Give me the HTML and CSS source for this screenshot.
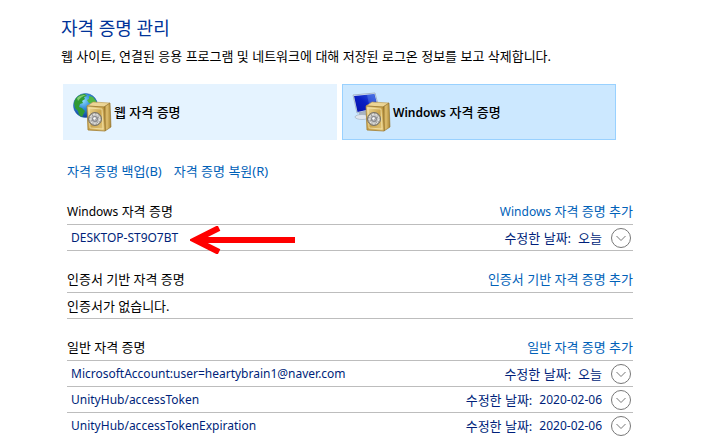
FILE: index.html
```html
<!DOCTYPE html>
<html lang="ko">
<head>
<meta charset="utf-8">
<title>자격 증명 관리</title>
<link rel="stylesheet" href="styles.css">
</head>
<body>
<svg class="defs" aria-hidden="true">
  <defs>
    <linearGradient id="gold" x1="0" y1="0" x2="1" y2="1">
      <stop offset="0" stop-color="#f3e0a0"/><stop offset=".5" stop-color="#c9a34c"/><stop offset="1" stop-color="#e6cb80"/>
    </linearGradient>
    <linearGradient id="side" x1="0" y1="0" x2="1" y2="0">
      <stop offset="0" stop-color="#8f6b1e"/><stop offset=".4" stop-color="#e0c070"/><stop offset="1" stop-color="#a98534"/>
    </linearGradient>
    <radialGradient id="sea" cx=".4" cy=".3" r=".7">
      <stop offset="0" stop-color="#8fdcff"/><stop offset=".5" stop-color="#2b86d6"/><stop offset="1" stop-color="#123f9c"/>
    </radialGradient>
    <linearGradient id="screen" x1="0" y1="1" x2="1" y2="0">
      <stop offset="0" stop-color="#0510a8"/><stop offset=".5" stop-color="#0a1fc4"/><stop offset="1" stop-color="#3b67e0"/>
    </linearGradient>
    <symbol id="safe" viewBox="0 0 40 40">
      <path d="M15 14 21 10 38 11 32 15z" fill="#ecd595" stroke="#b8954a" stroke-width=".6"/>
      <path d="M32 15 38 11 39 35 33 39z" fill="url(#side)" stroke="#8d6c25" stroke-width=".6"/>
      <path d="M15 14 32 15 33 39 16 38z" fill="url(#gold)" stroke="#a17c30" stroke-width=".8"/>
      <path d="M17 16 30 17 31 37 18 36z" fill="none" stroke="#f8e9b5" stroke-width=".7"/>
      <circle cx="23" cy="27" r="6.500" fill="#a8a49a" stroke="#77736a" stroke-width="1"/>
      <circle cx="23" cy="27" r="5" fill="#c4c4c2" stroke="#fff" stroke-width=".8" stroke-dasharray="2 1.500"/>
      <circle cx="23" cy="27" r="2.600" fill="#b4b4b6" stroke="#74767c" stroke-width=".7"/>
      <path d="M20 23l6 8M19 29l8-4" stroke="#888" stroke-width=".7"/>
      <circle cx="22.500" cy="26.500" r="1.200" fill="#fff"/>
    </symbol>
  </defs>
</svg>
<main class="page">
  <h1 class="title">자격 증명 관리</h1>
  <p class="intro">웹 사이트, 연결된 응용 프로그램 및 네트워크에 대해 저장된 로그온 정보를 보고 삭제합니다.</p>

  <div class="tiles">
    <button class="tile" type="button">
      <svg class="tile-icon" viewBox="0 0 40 40" aria-hidden="true">
        <circle cx="13.500" cy="13.500" r="12" fill="url(#sea)" stroke="#2a63a8" stroke-width=".6"/>
        <path d="M3 8C5 4 9 2 13 2l2 2-3 1 1 2-3 2 1 2-3 1-1 3 3 1 3 3-2 4-1 2-3-2-1-4-3-3-1-5z" fill="#2f9a34"/>
        <path d="M17 4l4 1 3 4 1 4-3 1-2-3-3 0-2-3 2-1z" fill="#4fb843"/>
        <path d="M5 6C8 3 11 3 14 3c-3 1-6 3-8 6z" fill="#b7eb9c" opacity=".6"/>
        <use href="#safe"/>
      </svg>
      <span>웹 자격 증명</span>
    </button>
    <button class="tile tile-active" type="button">
      <svg class="tile-icon" viewBox="0 0 40 40" aria-hidden="true">
        <path d="M8 20l7-1 1 5-8 1z" fill="#aab4c0"/>
        <ellipse cx="11" cy="25" rx="7" ry="2.500" fill="#dfe6ee" stroke="#9ba9b8" stroke-width=".6"/>
        <path d="M2 3 24 1 28 16 6 21z" fill="#e5edf5" stroke="#8c9db4" stroke-width=".7"/>
        <path d="M3 4 23.500 2 27 15.500 6.500 20z" fill="url(#screen)"/>
        <path d="M16 3 23 2.500 25 9 18 12z" fill="#7ba4fa" opacity=".3"/>
        <use href="#safe"/>
      </svg>
      <span><span class="latin">Windows</span> 자격 증명</span>
    </button>
  </div>

  <nav class="actions">
    <a href="#backup">자격 증명 백업(B)</a>
    <a href="#restore">자격 증명 복원(R)</a>
  </nav>

  <section class="group">
    <header class="group-head"><h2><span class="latin">Windows</span> 자격 증명</h2><a href="#add-windows"><span class="latin">Windows</span> 자격 증명 추가</a></header>
    <ul class="rows">
      <li class="row">
        <span class="name latin">DESKTOP-ST9O7BT
          <svg class="arrow" viewBox="0 0 106 28" aria-hidden="true"><path d="M8 14H105M29 2 5 14 29 26" fill="none" stroke="#f00" stroke-width="6"/></svg>
        </span>
        <span class="date"><span>수정한 날짜:</span><span>오늘</span></span>
        <button class="expand" type="button" aria-label="DESKTOP-ST9O7BT"><svg viewBox="0 0 20 20"><circle cx="10" cy="10" r="9.500"/><path d="M5.500 8 10 12.500 14.500 8"/></svg></button>
      </li>
    </ul>
  </section>

  <section class="group">
    <header class="group-head"><h2>인증서 기반 자격 증명</h2><a href="#add-certificate">인증서 기반 자격 증명 추가</a></header>
    <p class="row empty">인증서가 없습니다.</p>
  </section>

  <section class="group">
    <header class="group-head"><h2>일반 자격 증명</h2><a href="#add-generic">일반 자격 증명 추가</a></header>
    <ul class="rows">
      <li class="row">
        <span class="name latin">MicrosoftAccount:user=heartybrain1@naver.com</span>
        <span class="date"><span>수정한 날짜:</span><span>오늘</span></span>
        <button class="expand" type="button" aria-label="MicrosoftAccount"><svg viewBox="0 0 20 20"><circle cx="10" cy="10" r="9.500"/><path d="M5.500 8 10 12.500 14.500 8"/></svg></button>
      </li>
      <li class="row">
        <span class="name latin">UnityHub/accessToken</span>
        <span class="date"><span>수정한 날짜:</span><span class="latin">2020-02-06</span></span>
        <button class="expand" type="button" aria-label="UnityHub/accessToken"><svg viewBox="0 0 20 20"><circle cx="10" cy="10" r="9.500"/><path d="M5.500 8 10 12.500 14.500 8"/></svg></button>
      </li>
      <li class="row">
        <span class="name latin">UnityHub/accessTokenExpiration</span>
        <span class="date"><span>수정한 날짜:</span><span class="latin">2020-02-06</span></span>
        <button class="expand" type="button" aria-label="UnityHub/accessTokenExpiration"><svg viewBox="0 0 20 20"><circle cx="10" cy="10" r="9.500"/><path d="M5.500 8 10 12.500 14.500 8"/></svg></button>
      </li>
    </ul>
  </section>
</main>
</body>
</html>
```
FILE: styles.css
```css
* { box-sizing: border-box; }
body, h1, h2, p, ul { margin: 0; padding: 0; }
body {
  background: #fff;
  color: #000;
  font: 13px/20px "Noto Sans", "Noto Sans CJK KR", sans-serif;
}
button { font: inherit; color: inherit; cursor: pointer; }
a { color: #0061b8; text-decoration: none; }
a:hover { text-decoration: underline; }
.defs { position: absolute; width: 0; height: 0; }
.latin { font-size: 12px; }

.page { padding: 16px 87px 0 61px; }
.title { font-size: 18px; line-height: 24px; font-weight: 400; color: #003399; }
.intro { margin-top: 6px; }

.tiles {
  display: grid;
  grid-template-columns: 1fr 1fr;
  gap: 5px;
  margin: 18px 17px 0 2px;
}
.tile {
  display: flex;
  align-items: center;
  gap: 2px;
  height: 56px;
  padding: 0 8px;
  border: 1px solid #e5f3ff;
  background: #e5f3ff;
  font-weight: 500;
}
.tile .latin { font-weight: 600; }
.tile-active { border-color: #99d1ff; background: #cce8ff; }
.tile-icon { width: 40px; height: 40px; flex: none; }

.actions { display: flex; gap: 12px; margin: 21px 0 0 6px; }

.group { margin: 15px 0 0 6px; }
.actions + .group { margin-top: 17px; }
.group-head {
  display: flex;
  justify-content: space-between;
  align-items: center;
  height: 27px;
  border-bottom: 1px solid #bdbdbd;
}
.group-head h2 { font-size: 13px; font-weight: 400; }
.rows { list-style: none; }
.row {
  display: flex;
  align-items: center;
  height: 26px;
  border-bottom: 1px solid #bdbdbd;
  color: #001f7a;
}
.rows .row:last-child:not(:first-child) { border-bottom: 0; }
.empty { color: #000; }
.name { position: relative; flex: 1; padding-left: 4px; }
.arrow { position: absolute; left: 123px; top: -2px; width: 106px; height: 28px; }
.date { display: flex; gap: 7px; }
.expand {
  width: 20px;
  height: 20px;
  margin: 0 2px 0 9px;
  padding: 0;
  border: 0;
  background: none;
}
.expand svg { display: block; fill: none; stroke: #777; }
```
